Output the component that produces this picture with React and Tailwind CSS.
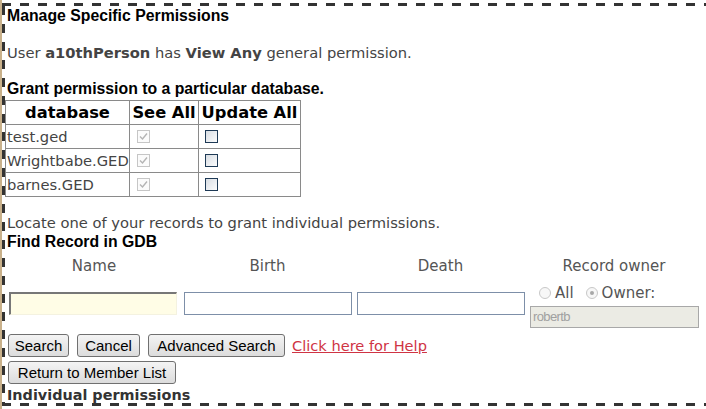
import React from "react";

const verdana = "font-['DejaVu_Sans',Verdana,sans-serif]";
const arial = "font-['Liberation_Sans',Arial,sans-serif]";

function DisabledCheck() {
  return (
    <span className="inline-flex w-[13px] h-[13px] border border-[#c6c6c6] bg-[#fbfbfb] items-center justify-center">
      <svg width="9" height="9" viewBox="0 0 9 9">
        <path d="M1 4.5 L3.5 7 L8 1.5" fill="none" stroke="#b4b4b4" strokeWidth="1.4" />
      </svg>
    </span>
  );
}

function Check() {
  return (
    <span className="inline-block w-[13px] h-[13px] border border-[#1e3a56] bg-gradient-to-br from-[#d8dde3] to-[#fbfcfd]" />
  );
}

function Radio({ checked }) {
  return (
    <span className="inline-flex w-[12px] h-[12px] rounded-full border border-[#c8c8c8] bg-[#f7f7f7] items-center justify-center">
      {checked && <span className="w-[4px] h-[4px] rounded-full bg-[#a8a8a8]" />}
    </span>
  );
}

function Btn({ children, w }) {
  return (
    <button className={`${arial} ${w} text-[15px] text-black h-[23px] border border-[#707070] rounded-[3px] bg-gradient-to-b from-[#f4f4f4] to-[#dcdcdc] leading-none`}>
      {children}
    </button>
  );
}

export default function App() {
  const dbs = ["test.ged", "Wrightbabe.GED", "barnes.GED"];
  return (
    <div className="w-[706px] h-[409px] bg-white flex overflow-hidden">
      <div className="w-[2px] shrink-0 bg-[#c9b18b]" />
      <div className="flex-1 mt-[3px] h-[403px] flex flex-col">
        <div className="h-[3px] shrink-0 bg-[repeating-linear-gradient(90deg,#333_0_9px,transparent_9px_18px)]" />
        <div className="flex flex-1 min-h-0">
          <div className="w-[3px] shrink-0 bg-[repeating-linear-gradient(180deg,#333_0_9px,transparent_9px_18px)]" />
          <div className="flex-1 pl-[2px] overflow-hidden">
            <div className={`${arial} font-bold text-[15.8px] text-black mt-[1px] leading-[18px]`}>
              Manage Specific Permissions
            </div>
            <div className={`${verdana} text-[14.7px] text-[#444] mt-[19px] leading-[18px]`}>
              User <b>a10thPerson</b> has <b>View Any</b> general permission.
            </div>
            <div className={`${arial} font-bold text-[15.8px] text-black mt-[18px] leading-[18px]`}>
              Grant permission to a particular database.
            </div>
            <table className={`${verdana} border-collapse border border-[#8a8a8a] ml-[-2px] mt-[2px]`}>
              <thead>
                <tr className="h-[24px]">
                  <th className="border border-[#8a8a8a] w-[124px] text-[16.3px] font-bold text-black leading-[20px]">database</th>
                  <th className="border border-[#8a8a8a] w-[69px] text-[16.3px] font-bold text-black leading-[20px]">See All</th>
                  <th className="border border-[#8a8a8a] w-[102px] text-[16.3px] font-bold text-black leading-[20px]">Update All</th>
                </tr>
              </thead>
              <tbody>
                {dbs.map((d) => (
                  <tr key={d} className="h-[24px]">
                    <td className="border border-[#8a8a8a] text-[14.7px] text-[#444] pl-[1px] leading-[18px] whitespace-nowrap">{d}</td>
                    <td className="border border-[#8a8a8a] pl-[7px] align-middle">
                      <span className="flex"><DisabledCheck /></span>
                    </td>
                    <td className="border border-[#8a8a8a] pl-[6px] align-middle">
                      <span className="flex"><Check /></span>
                    </td>
                  </tr>
                ))}
              </tbody>
            </table>
            <div className={`${verdana} text-[14.7px] text-[#444] mt-[17px] leading-[18px]`}>
              Locate one of your records to grant individual permissions.
            </div>
            <div className={`${arial} font-bold text-[15.8px] text-black leading-[18px] mt-[1px]`}>
              Find Record in GDB
            </div>
            <div className={`${verdana} text-[15px] text-[#555] leading-[18px] grid grid-cols-[174px_173px_173px_174px] mt-[6px]`}>
              <div className="text-center">Name</div>
              <div className="text-center">Birth</div>
              <div className="text-center">Death</div>
              <div className="text-center">Record owner</div>
            </div>
            <div className={`${verdana} text-[15px] text-[#555] grid grid-cols-[174px_173px_173px_174px] items-start`}>
              <div className="mt-[17px] ml-[2px] w-[168px] h-[23px] bg-[#fffde6] border-t-2 border-l-2 border-[#777] border-b border-r border-b-[#f4f2e0] border-r-[#f4f2e0]" />
              <div className="mt-[17px] ml-[3px] w-[168px] h-[23px] border border-[#7d8fa8]" />
              <div className="mt-[17px] ml-[3px] w-[168px] h-[23px] border border-[#7d8fa8]" />
              <div className="mt-[11px]">
                <div className="flex items-center gap-[4px] ml-[12px] h-[14px] leading-none">
                  <Radio /> <span className="text-[#555]">All</span>
                  <span className="w-[4px]" />
                  <Radio checked /> <span className="text-[#555]">Owner:</span>
                </div>
                <div className={`${arial} ml-[3px] mt-[6px] w-[169px] h-[22px] border border-[#a8a8a8] bg-[#ebebe4] text-[13px] tracking-[-0.6px] text-[#a0a0a0] pl-[2px] flex items-center`}>
                  robertb
                </div>
              </div>
            </div>
            <div className="flex items-center mt-[6px] ml-[1px]">
              <Btn w="w-[61px]">Search</Btn>
              <span className="w-[8px]" />
              <Btn w="w-[63px]">Cancel</Btn>
              <span className="w-[8px]" />
              <Btn w="w-[137px]">Advanced Search</Btn>
              <a href="#" className={`${verdana} text-[14.6px] text-[#cf3444] underline ml-[7px]`}>
                Click here for Help
              </a>
            </div>
            <div className="mt-[3px] ml-[1px]">
              <Btn w="w-[168px]">Return to Member List</Btn>
            </div>
            <div className={`${verdana} font-bold text-[14.4px] text-[#333] leading-[18px] mt-[2px]`}>
              Individual permissions
            </div>
          </div>
        </div>
        <div className="h-[3px] shrink-0 bg-[repeating-linear-gradient(90deg,#333_0_9px,transparent_9px_18px)]" />
      </div>
    </div>
  );
}
